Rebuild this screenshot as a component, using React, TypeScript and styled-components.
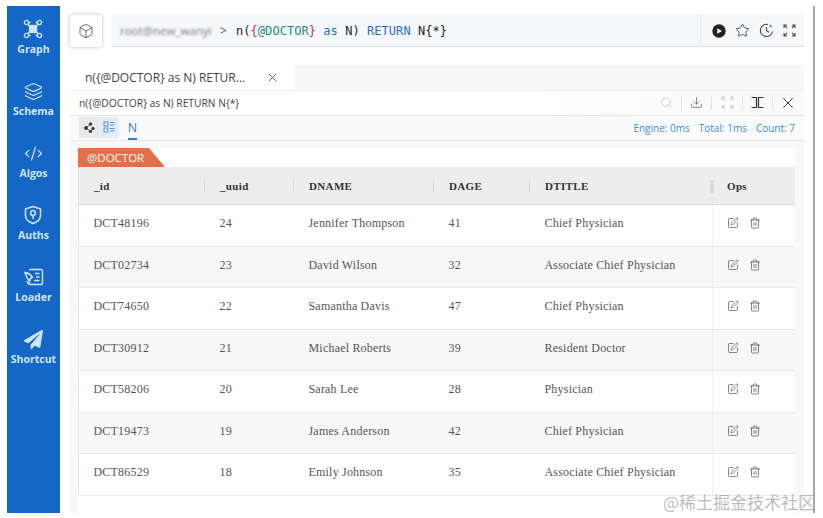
import React from "react";
import styled, { createGlobalStyle } from "styled-components";
import { Box, Layers, CodeXml, Star, Search, Download, X, SquarePen, Trash2 } from "lucide-react";
import { FaPaperPlane } from "react-icons/fa";

const Global = createGlobalStyle`
  html, body { margin: 0; padding: 0; background: #fff; }
  body { font-family: "Open Sans", "Noto Sans", sans-serif; }
`;

const Page = styled.div`
  position: relative;
  width: 823px;
  height: 518px;
  padding: 6px 0 5px 7px;
  box-sizing: border-box;
  display: flex;
  overflow: hidden;
`;

const Sidebar = styled.nav`
  width: 53px;
  background: #1467c6;
  display: flex;
  flex-direction: column;
  align-items: center;
  padding-top: 10px;
  gap: 19px;
  flex: none;
`;

const NavItem = styled.div`
  display: flex;
  flex-direction: column;
  align-items: center;
  height: 43px;
  gap: 0;
  color: #cfe4fb;
  font-size: 10.5px;
  font-weight: 700;
  line-height: 14px;
  white-space: nowrap;
`;

const NavIcon = styled.div`
  height: 26px;
  display: flex;
  align-items: center;
  justify-content: center;
`;

const Main = styled.main`
  flex: none;
  border-right: 2px solid #a9a9a9;
  box-sizing: content-box;
  padding: 8px 9px 0 10px;
  width: 734px;
  display: flex;
  flex-direction: column;
  background: #fff;
`;

const TopRow = styled.div`
  display: flex;
  gap: 9px;
  height: 33px;
  flex: none;
`;

const CubeButton = styled.button`
  width: 32px;
  height: 32px;
  border: none;
  border-radius: 3px;
  background: #fff;
  box-shadow: 0 0 4px rgba(0, 0, 0, 0.25);
  display: flex;
  align-items: center;
  justify-content: center;
  padding: 0;
  color: #444;
  margin-top: 1px;
`;

const QueryBar = styled.div`
  flex: 1;
  height: 33px;
  background: #f6f7f9;
  border-bottom: 1px solid #dcdde0;
  box-sizing: border-box;
  display: flex;
  align-items: center;
  border-radius: 2px;
`;

const User = styled.span`
  margin-left: 9px;
  width: 100px;
  font-size: 11.5px;
  color: #777;
  filter: blur(1.3px);
  white-space: nowrap;
  padding-top: 1px;
`;

const Prompt = styled.span`
  font-size: 12px;
  color: #555;
  width: 16px;
  padding-top: 1px;
`;

const Code = styled.code`
  font-family: "DejaVu Sans Mono", monospace;
  font-size: 12px;
  letter-spacing: 0.05px;
  color: #222;
  flex: 1;
  white-space: pre;
  padding-top: 1px;
`;

const Tok = styled.span<{ $c: string }>`
  color: ${(p) => p.$c};
`;

const RunTools = styled.div`
  height: 100%;
  width: 104px;
  box-sizing: border-box;
  border-left: 1px solid #e8e8ea;
  display: flex;
  align-items: center;
  justify-content: flex-end;
  gap: 9px;
  padding: 1px 8px 0 0;
  color: #333;
`;

const TabStrip = styled.div`
  margin-top: 18px;
  height: 25px;
  background: #f8f8f9;
  display: flex;
  flex: none;
`;

const Tab = styled.div`
  width: 225px;
  background: #fff;
  display: flex;
  align-items: center;
  justify-content: space-between;
  box-sizing: border-box;
  padding: 0 16px 0 15px;
  font-size: 12px;
  color: #444;
  white-space: nowrap;
`;

const Panel = styled.section`
  flex: 1;
  min-height: 0;
  background: #f8f8f9;
  display: flex;
  flex-direction: column;
`;

const TitleRow = styled.div`
  height: 24px;
  flex: none;
  border-top: 1px solid #eee;
  border-bottom: 1px solid #e6e6e6;
  display: flex;
  align-items: center;
  justify-content: space-between;
  padding-left: 9px;
  font-size: 10.25px;
  color: #444;
  background: linear-gradient(90deg, #fff 60%, #f9f9fa);
`;

const TitleTools = styled.div`
  display: flex;
  align-items: center;
  height: 14px;
  padding: 0 2px 1px 0;
`;

const ToolSlot = styled.div<{ $w: number; $sep?: boolean; $c?: string }>`
  width: ${(p) => p.$w}px;
  height: 14px;
  display: flex;
  align-items: center;
  justify-content: center;
  color: ${(p) => p.$c || "#333"};
  border-left: ${(p) => (p.$sep ? "1px solid #e5e5e5" : "none")};
  box-sizing: border-box;
`;

const ResultRow = styled.div`
  height: 24px;
  flex: none;
  background: #fafafb;
  border-bottom: 1px solid #e6e6e8;
  display: flex;
  align-items: center;
  padding-left: 9px;
`;

const ViewSwitch = styled.div`
  display: flex;
  height: 21px;
  background: #e9e9ea;
  margin-top: -2px;
`;

const ViewBtn = styled.div<{ $on?: boolean }>`
  width: 20px;
  display: flex;
  align-items: center;
  justify-content: center;
  background: ${(p) => (p.$on ? "#e4edf7" : "transparent")};
  color: ${(p) => (p.$on ? "#5b93d3" : "#333")};
`;

const ResultTab = styled.div`
  margin-left: 9px;
  font-size: 12.5px;
  line-height: 20px;
  height: 23px;
  box-sizing: border-box;
  color: #2f80cf;
  border-bottom: 2px solid #2f80cf;
  padding: 1px 0 0;
  width: 9px;
  display: flex;
  justify-content: center;
`;

const Stats = styled.div`
  margin-left: auto;
  padding-right: 9px;
  font-size: 10px;
  color: #3e8bd6;
  display: flex;
  gap: 9px;
`;

const Content = styled.div`
  margin: 7px 9px 0 8px;
  display: flex;
  flex-direction: column;
  flex: 1;
  min-height: 0;
  background: #fff;
`;

const SchemaHead = styled.div`
  height: 19px;
  flex: none;
  background: #fff;
`;

const SchemaTag = styled.div`
  width: 87px;
  height: 19px;
  box-sizing: border-box;
  padding-left: 9px;
  background: #e2704a;
  clip-path: polygon(0 0, 71px 0, 87px 100%, 0 100%);
  color: #fff;
  font-size: 11.5px;
  line-height: 19px;
`;

const COLS = "126px 89px 140px 96px 182px 85px";

const HeadRow = styled.div`
  display: grid;
  grid-template-columns: ${COLS};
  height: 38px;
  flex: none;
  background: #ededee;
  border-bottom: 1px solid #d8d8d8;
  box-sizing: border-box;
  align-items: center;
  border-left: 1px solid #e3e3e3;
`;

const HeadCell = styled.div<{ $strong?: boolean }>`
  position: relative;
  padding-left: 15px;
  font-family: "Liberation Serif", serif;
  font-weight: 700;
  font-size: 11px;
  letter-spacing: 0.35px;
  color: #333;
  &::before {
    content: "";
    position: absolute;
    left: ${(p) => (p.$strong ? "-2px" : "-1px")};
    top: 0;
    height: 13px;
    width: ${(p) => (p.$strong ? "4px" : "1px")};
    background: #d9d9d9;
  }
  &:first-child::before {
    display: none;
  }
`;

const Row = styled.div<{ $alt?: boolean }>`
  display: grid;
  grid-template-columns: ${COLS};
  height: 41.5px;
  flex: none;
  box-sizing: border-box;
  background: ${(p) => (p.$alt ? "#f7f7f7" : "#fff")};
  border-bottom: 1px solid #e9e9e9;
  border-left: 1px solid #e9e9e9;
`;

const Cell = styled.div`
  padding: 11px 0 0 14.5px;
  font-family: "Liberation Serif", serif;
  font-size: 12px;
  line-height: 14px;
  letter-spacing: 0.2px;
  color: #555;
  white-space: nowrap;
`;

const OpsCell = styled.div`
  border-left: 1px solid #efefef;
  display: flex;
  gap: 10px;
  padding: 12px 0 0 14px;
  color: #444;
  box-sizing: border-box;
  height: 100%;
`;

const Watermark = styled.div`
  position: absolute;
  right: 8px;
  bottom: 6px;
  font-family: "Noto Sans CJK SC", sans-serif;
  font-size: 17px;
  line-height: 20px;
  color: rgba(120, 120, 120, 0.5);
  white-space: nowrap;
`;

const GraphIcon = () => (
  <svg width="20" height="20" viewBox="0 0 20 20" fill="none" stroke="#cfe4fb" strokeWidth="1.3">
    <circle cx="3.5" cy="3.5" r="2.1" />
    <circle cx="16.5" cy="3.5" r="2.1" />
    <circle cx="3.5" cy="16.5" r="2.1" />
    <circle cx="16.5" cy="16.5" r="2.1" />
    <rect x="6.5" y="6.5" width="7" height="7" fill="#cfe4fb" />
    <path d="M6 3.5h1.5M12.500 3.500H14M6 16.500h1.500M12.500 16.500H14M5 5.500l2 2M15 5.500l-2 2M5 14.500l2-2M15 14.500l-2-2" />
  </svg>
);

const AuthIcon = () => (
  <svg width="18" height="20" viewBox="0 0 18 20" fill="none" stroke="#cfe4fb" strokeWidth="1.5">
    <path d="M9 1.500 16.500 4v6.500c0 4-3.500 6.500-7.500 8-4-1.500-7.500-4-7.500-8V4z" strokeLinejoin="round" />
    <circle cx="9" cy="8" r="2.400" />
    <path d="M9 10.500v3.500" />
  </svg>
);

const LoaderIcon = () => (
  <svg width="20" height="20" viewBox="0 0 20 20" fill="none" stroke="#cfe4fb" strokeWidth="1.4">
    <path d="M5 2.500h12a1.500 1.500 0 0 1 1.500 1.500v12a1.500 1.500 0 0 1-1.500 1.500H7c-2 0-3.500-1.500-4-3.500" strokeLinejoin="round" />
    <path d="M1 5.500c3 .5 5.500 2 7.500 4.500-2 1-3 2.500-3 4.500C3.500 12 2 9 1 5.500z" />
    <path d="M11 6.500h4.500M12 10h3.500M10 13.500h5.500" />
  </svg>
);

const Play = () => (
  <svg width="14" height="14" viewBox="0 0 14 14">
    <circle cx="7" cy="7" r="6.700" fill="#222" />
    <path d="M5.300 4.200 10 7l-4.700 2.800z" fill="#fff" />
  </svg>
);

const Clock = () => (
  <svg width="15" height="15" viewBox="0 0 15 15" fill="none" stroke="#444" strokeWidth="1.100">
    <path d="M9 1.500A6.100 6.100 0 1 0 13.500 8.500" />
    <path d="M11 2.500l1.500 1.500M7.500 4v3.800l2.500 1.500" />
  </svg>
);

const Corners = ({ c = "#555" }: { c?: string }) => (
  <svg width="13" height="13" viewBox="0 0 13 13" fill="none" stroke={c} strokeWidth="1.100">
    <path d="M1 4V1h3M1 1l3 3M12 4V1H9M12 1 9 4M1 9v3h3M1 12l3-3M12 9v3H9M12 12 9 9" />
  </svg>
);

const ColumnIcon = () => (
  <svg width="13" height="13" viewBox="0 0 13 13" fill="none" stroke="#333" strokeWidth="1.200">
    <path d="M.5 1.500h5v10h-5M12.500 1.500h-5v10h5" />
  </svg>
);

const NodesIcon = () => (
  <svg width="11" height="11" viewBox="0 0 11 11" fill="#333" stroke="#333" strokeWidth=".8">
    <circle cx="6.500" cy="2" r="1.300" />
    <circle cx="2" cy="6" r="1.500" />
    <circle cx="9" cy="6.500" r="1.200" />
    <circle cx="6.500" cy="9.500" r="1.200" />
    <path d="M6.500 2 2 6l4.500 3.500L9 6.500" fill="none" />
  </svg>
);

const ListIcon = () => (
  <svg width="12" height="12" viewBox="0 0 12 12" fill="none" stroke="currentColor" strokeWidth="1">
    <rect x="1" y="1" width="4" height="4" />
    <rect x="1" y="7" width="4" height="4" />
    <path d="M7 1.500h4.500M7 4h4.500M7 7.500h4.500M7 10h4.500" />
  </svg>
);

type Doc = { id: string; uuid: number; name: string; age: number; title: string };

const doctors: Doc[] = [
  { id: "DCT48196", uuid: 24, name: "Jennifer Thompson", age: 41, title: "Chief Physician" },
  { id: "DCT02734", uuid: 23, name: "David Wilson", age: 32, title: "Associate Chief Physician" },
  { id: "DCT74650", uuid: 22, name: "Samantha Davis", age: 47, title: "Chief Physician" },
  { id: "DCT30912", uuid: 21, name: "Michael Roberts", age: 39, title: "Resident Doctor" },
  { id: "DCT58206", uuid: 20, name: "Sarah Lee", age: 28, title: "Physician" },
  { id: "DCT19473", uuid: 19, name: "James Anderson", age: 42, title: "Chief Physician" },
  { id: "DCT86529", uuid: 18, name: "Emily Johnson", age: 35, title: "Associate Chief Physician" },
];

const nav = [
  { label: "Graph", icon: <GraphIcon /> },
  { label: "Schema", icon: <Layers size={19} strokeWidth={1.5} /> },
  { label: "Algos", icon: <CodeXml size={19} strokeWidth={1.6} /> },
  { label: "Auths", icon: <AuthIcon /> },
  { label: "Loader", icon: <LoaderIcon /> },
  { label: "Shortcut", icon: <FaPaperPlane size={19} /> },
];

export default function App() {
  return (
    <Page>
      <Global />
      <Sidebar>
        {nav.map((n) => (
          <NavItem key={n.label}>
            <NavIcon>{n.icon}</NavIcon>
            {n.label}
          </NavItem>
        ))}
      </Sidebar>
      <Main>
        <TopRow>
          <CubeButton>
            <Box size={16} strokeWidth={1.2} />
          </CubeButton>
          <QueryBar>
            <User>root@new_wanyi</User>
            <Prompt>&gt;</Prompt>
            <Code>
              n(<Tok $c="#c0392b">{"{"}</Tok>
              <Tok $c="#1f8a8a">@DOCTOR</Tok>
              <Tok $c="#c0392b">{"}"}</Tok> <Tok $c="#2a6fc0">as</Tok> N) <Tok $c="#2a6fc0">RETURN</Tok> N{"{*}"}
            </Code>
            <RunTools>
              <Play />
              <Star size={15} strokeWidth={1.3} />
              <Clock />
              <Corners />
            </RunTools>
          </QueryBar>
        </TopRow>
        <TabStrip>
          <Tab>
            n({"{"}@DOCTOR{"}"} as N) RETUR...
            <X size={13} strokeWidth={1.5} />
          </Tab>
        </TabStrip>
        <Panel>
          <TitleRow>
            n({"{"}@DOCTOR{"}"} as N) RETURN N{"{*}"}
            <TitleTools>
              <ToolSlot $w={30} $c="#bbb"><Search size={13} strokeWidth={1.2} /></ToolSlot>
              <ToolSlot $w={30} $sep $c="#555"><Download size={13} strokeWidth={1.3} /></ToolSlot>
              <ToolSlot $w={31} $sep><Corners c="#ccc" /></ToolSlot>
              <ToolSlot $w={30} $sep><ColumnIcon /></ToolSlot>
              <ToolSlot $w={30} $sep><X size={18} strokeWidth={1.3} /></ToolSlot>
            </TitleTools>
          </TitleRow>
          <ResultRow>
            <ViewSwitch>
              <ViewBtn><NodesIcon /></ViewBtn>
              <ViewBtn $on><ListIcon /></ViewBtn>
            </ViewSwitch>
            <ResultTab>N</ResultTab>
            <Stats>
              <span>Engine: 0ms</span>
              <span>Total: 1ms</span>
              <span>Count: 7</span>
            </Stats>
          </ResultRow>
          <Content>
            <SchemaHead>
              <SchemaTag>@DOCTOR</SchemaTag>
            </SchemaHead>
            <HeadRow>
              <HeadCell>_id</HeadCell>
              <HeadCell>_uuid</HeadCell>
              <HeadCell>DNAME</HeadCell>
              <HeadCell>DAGE</HeadCell>
              <HeadCell>DTITLE</HeadCell>
              <HeadCell $strong>Ops</HeadCell>
            </HeadRow>
            {doctors.map((d, i) => (
              <Row key={d.id} $alt={i % 2 === 1}>
                <Cell>{d.id}</Cell>
                <Cell>{d.uuid}</Cell>
                <Cell>{d.name}</Cell>
                <Cell>{d.age}</Cell>
                <Cell>{d.title}</Cell>
                <OpsCell>
                  <SquarePen size={12} strokeWidth={1.3} />
                  <Trash2 size={12} strokeWidth={1.3} />
                </OpsCell>
              </Row>
            ))}
          </Content>
        </Panel>
      </Main>
      <Watermark>@稀土掘金技术社区</Watermark>
    </Page>
  );
}
